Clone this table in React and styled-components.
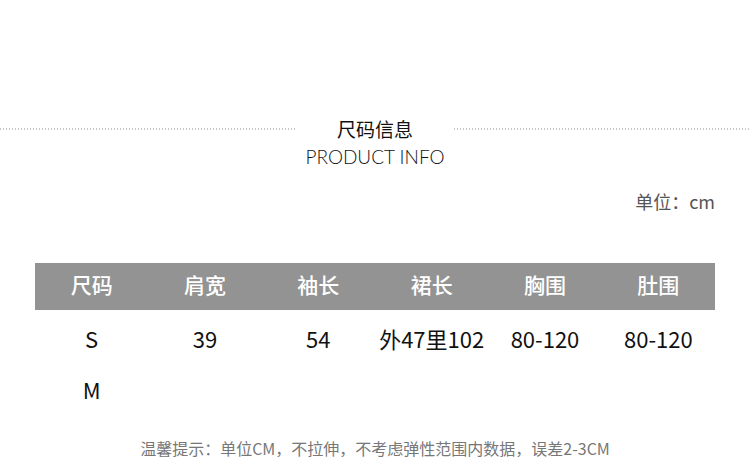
import React from 'react';
import styled, { createGlobalStyle } from 'styled-components';

const GlobalStyle = createGlobalStyle`
  html, body {
    margin: 0;
    padding: 0;
    background: #fff;
  }
  body {
    font-family: "Noto Sans CJK SC", "Noto Sans", sans-serif;
  }
`;

const Page = styled.div`
  width: 750px;
  height: 463px;
  display: flex;
  flex-direction: column;
  overflow: hidden;
`;

const TitleBlock = styled.div`
  margin-top: 115px;
  display: flex;
  flex-direction: column;
  align-items: center;
`;

const TitleRow = styled.div`
  width: 100%;
  display: flex;
  align-items: center;
  gap: 10px;
`;

const Dots = styled.div`
  flex: 1;
  height: 2px;
  background-image: repeating-linear-gradient(
    to right,
    #c8c8c8 0,
    #c8c8c8 1.5px,
    transparent 1.5px,
    transparent 3px
  );
`;

const TitleCn = styled.div`
  width: 138px;
  text-align: center;
  font-size: 19px;
  line-height: 28px;
  color: #111;
`;

const TitleEn = styled.div`
  font-family: "Lato", "Liberation Sans", sans-serif;
  font-weight: 300;
  font-size: 19px;
  line-height: 24px;
  color: #111;
  margin-top: 2px;
`;

const Unit = styled.div`
  align-self: flex-end;
  margin: 20px 35px 0 0;
  font-size: 18px;
  line-height: 24px;
  color: #555;
`;

const Table = styled.div`
  margin: 50px 35px 0;
  display: flex;
  flex-direction: column;
`;

const Row = styled.div`
  display: grid;
  grid-template-columns: repeat(6, 1fr);
  height: ${p => (p.$head ? '47px' : '51px')};
  background: ${p => (p.$head ? '#939393' : 'transparent')};
  margin-top: ${p => (p.$first ? '2px' : '0')};
`;

const Cell = styled.div`
  display: flex;
  align-items: center;
  justify-content: center;
  padding-bottom: ${p => (p.$head ? '5px' : '0')};
  font-size: ${p => (p.$head ? '21px' : '22px')};
  font-weight: ${p => (p.$head ? 500 : 400)};
  color: ${p => (p.$head ? '#fff' : '#111')};
  white-space: nowrap;
`;

const Note = styled.div`
  margin-top: auto;
  margin-bottom: 4px;
  text-align: center;
  font-size: 16px;
  line-height: 22px;
  color: #777;
`;

const headers = ['尺码', '肩宽', '袖长', '裙长', '胸围', '肚围'];
const rows = [
  ['S', '39', '54', '外47里102', '80-120', '80-120'],
  ['M', '', '', '', '', ''],
];

export default function App() {
  return (
    <Page>
      <GlobalStyle />
      <TitleBlock>
        <TitleRow>
          <Dots />
          <TitleCn>尺码信息</TitleCn>
          <Dots />
        </TitleRow>
        <TitleEn>PRODUCT INFO</TitleEn>
      </TitleBlock>
      <Unit>单位：cm</Unit>
      <Table>
        <Row $head>
          {headers.map(h => (
            <Cell key={h} $head>{h}</Cell>
          ))}
        </Row>
        {rows.map((r, i) => (
          <Row key={i} $first={i === 0}>
            {r.map((c, j) => (
              <Cell key={j}>{c}</Cell>
            ))}
          </Row>
        ))}
      </Table>
      <Note>温馨提示：单位CM，不拉伸，不考虑弹性范围内数据，误差2-3CM</Note>
    </Page>
  );
}
